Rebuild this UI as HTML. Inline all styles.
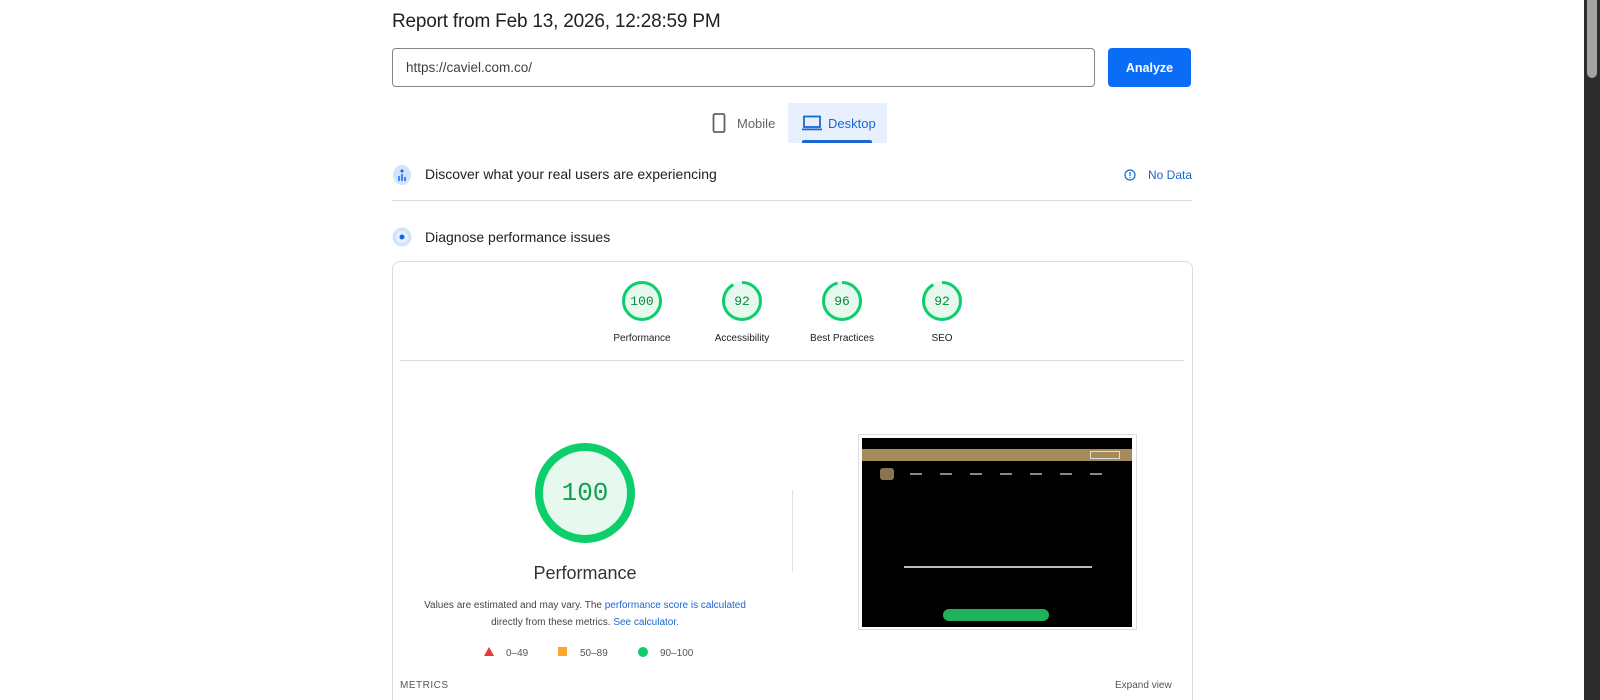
<!DOCTYPE html>
<html><head><meta charset="utf-8">
<style>
*{box-sizing:border-box;margin:0;padding:0}
html,body{width:1600px;height:700px;overflow:hidden}
body{background:#fff;font-family:"Liberation Sans",Arial,sans-serif;color:#202124;position:relative}
.a{position:absolute}
.sb{left:1584px;top:0;width:16px;height:700px;background:#2c2c2c}
.th{left:1587px;top:0;width:10px;height:78px;background:#a3a3a3;border-radius:0 0 5px 5px}
.title{left:392px;top:11px;font-size:19px;color:#202124;letter-spacing:-0.2px}
.inp{left:392px;top:48px;width:703px;height:39px;border:1px solid #80868b;border-radius:4px;font-size:13.5px;padding:11px 13px;color:#3c4043}
.btn{left:1108px;top:48px;width:83px;height:39px;border-radius:4px;color:#fff;font-size:12.5px;font-weight:bold;text-align:center;line-height:40px;background:#0b6cf5}
.tabd{left:788px;top:103px;width:99px;height:40px;background:#e8f0fe}
.ul{left:802px;top:140px;width:70px;height:3px;background:#1967d2;border-radius:2px 2px 0 0}
.t{font-size:13px}
.hr{height:1px;background:#dadce0}
.lbl{font-size:10px;color:#202124;text-align:center;width:100px}
.gt{font-family:"Liberation Mono",monospace;color:#0a8a3a;text-align:center}
</style></head><body>
<div class="a title">Report from Feb 13, 2026, 12:28:59 PM</div>
<div class="a inp">https://caviel.com.co/</div>
<div class="a btn">Analyze</div>
<svg class="a" style="left:712px;top:113px" width="14" height="20" viewBox="0 0 14 20"><rect x="1.5" y="1" width="11" height="18" rx="1.5" fill="none" stroke="#5f6368" stroke-width="1.8"/></svg>
<div class="a t" style="left:737px;top:116px;color:#5f6368">Mobile</div>
<div class="a tabd"></div>
<svg class="a" style="left:802px;top:115px" width="20" height="16" viewBox="0 0 20 16"><rect x="2" y="1.5" width="16" height="10.5" fill="none" stroke="#1967d2" stroke-width="1.8"/><rect x="0" y="13.5" width="20" height="1.8" fill="#1967d2"/></svg>
<div class="a t" style="left:828px;top:116px;color:#1967d2">Desktop</div>
<div class="a ul"></div>

<svg class="a" style="left:392px;top:164px" width="20" height="22"><ellipse cx="10" cy="11" rx="9" ry="10" fill="#d2e3fc"/><rect x="6" y="12" width="2" height="5" fill="#4285f4"/><rect x="9" y="10" width="2" height="7" fill="#4285f4"/><rect x="12" y="13" width="2" height="4" fill="#4285f4"/><circle cx="10" cy="7" r="1.5" fill="#1967d2"/></svg>
<div class="a" style="left:425px;top:166px;font-size:14px">Discover what your real users are experiencing</div>
<svg class="a" style="left:1124px;top:169px" width="12" height="12"><circle cx="6" cy="6" r="5" fill="none" stroke="#1967d2" stroke-width="1.2"/><rect x="5.4" y="3" width="1.2" height="4" fill="#1967d2"/><rect x="5.4" y="8" width="1.2" height="1.2" fill="#1967d2"/></svg>
<div class="a" style="left:1148px;top:168px;font-size:12px;color:#1967d2">No Data</div>
<div class="a hr" style="left:392px;top:200px;width:800px"></div>

<svg class="a" style="left:392px;top:227px" width="20" height="20"><circle cx="10" cy="10" r="9.5" fill="#d2e3fc"/><circle cx="10" cy="10" r="6" fill="#e8f0fe"/><circle cx="10" cy="10" r="2.5" fill="#1967d2"/></svg>
<div class="a" style="left:425px;top:229px;font-size:14px">Diagnose performance issues</div>

<div class="a" style="left:392px;top:261px;width:801px;height:439px;border:1px solid #dadce0;border-bottom:none;border-radius:8px 8px 0 0"></div>

<svg class="a" style="left:0;top:0" width="1600" height="700">
<g fill="#e7f8ee" stroke="#0cce6b" stroke-width="3">
<circle cx="642" cy="301" r="18.5"/>
<circle cx="742" cy="301" r="18.5" stroke="#e7f8ee"/>
<circle cx="842" cy="301" r="18.5" stroke="#e7f8ee"/>
<circle cx="942" cy="301" r="18.5" stroke="#e7f8ee"/>
</g>
<g fill="none" stroke="#0cce6b" stroke-width="3">
<circle cx="742" cy="301" r="18.5" stroke-dasharray="107 200" transform="rotate(-90 742 301)"/>
<circle cx="842" cy="301" r="18.5" stroke-dasharray="111.5 200" transform="rotate(-90 842 301)"/>
<circle cx="942" cy="301" r="18.5" stroke-dasharray="107 200" transform="rotate(-90 942 301)"/>
</g>
<circle cx="585" cy="493" r="46" fill="#e7f8ee" stroke="#0cce6b" stroke-width="8"/>
<polygon points="489,647 494,656 484,656" fill="#e53935"/>
<rect x="558" y="647" width="9" height="9" fill="#ffa726"/>
<circle cx="643" cy="652" r="5" fill="#0cce6b"/>
</svg>
<div class="a gt" style="left:622px;top:294px;width:40px;font-size:13px">100</div>
<div class="a gt" style="left:722px;top:294px;width:40px;font-size:13px">92</div>
<div class="a gt" style="left:822px;top:294px;width:40px;font-size:13px">96</div>
<div class="a gt" style="left:922px;top:294px;width:40px;font-size:13px">92</div>
<div class="a lbl" style="left:592px;top:333px">Performance</div>
<div class="a lbl" style="left:692px;top:333px">Accessibility</div>
<div class="a lbl" style="left:792px;top:333px">Best Practices</div>
<div class="a lbl" style="left:892px;top:333px">SEO</div>
<div class="a hr" style="left:400px;top:360px;width:784px"></div>

<div class="a gt" style="left:535px;top:478px;width:100px;font-size:26px;color:#10a050">100</div>
<div class="a" style="left:485px;top:563px;width:200px;text-align:center;font-size:18px;color:#333">Performance</div>
<div class="a" style="left:400px;top:597px;width:370px;text-align:center;font-size:10px;line-height:17px;color:#444">Values are estimated and may vary. The <span style="color:#1967d2">performance score is calculated</span><br>directly from these metrics. <span style="color:#1967d2">See calculator.</span></div>
<div class="a" style="left:506px;top:648px;font-size:10px;color:#555">0–49</div>
<div class="a" style="left:580px;top:648px;font-size:10px;color:#555">50–89</div>
<div class="a" style="left:660px;top:648px;font-size:10px;color:#555">90–100</div>
<div class="a" style="left:400px;top:680px;font-size:10px;color:#555;letter-spacing:.5px">METRICS</div>
<div class="a" style="left:1115px;top:680px;font-size:10px;color:#555">Expand view</div>

<div class="a" style="left:792px;top:490px;width:1px;height:82px;background:#e0e0e0"></div>
<div class="a" style="left:858px;top:434px;width:279px;height:196px;border:1px solid #ddd;background:#fff"></div>
<div class="a" style="left:862px;top:438px;width:270px;height:189px;background:#000"></div>
<div class="a" style="left:862px;top:449px;width:270px;height:12px;background:#a58a5a"></div>
<div class="a" style="left:1090px;top:451px;width:30px;height:8px;border:1px solid #ddd"></div>
<div class="a" style="left:880px;top:468px;width:14px;height:12px;background:#8a7350;border-radius:3px"></div>
<div class="a" style="left:910px;top:473px;width:200px;height:2px;background:repeating-linear-gradient(90deg,#888 0 12px,transparent 12px 30px)"></div>
<div class="a" style="left:904px;top:566px;width:188px;height:2px;background:#bbb"></div>
<div class="a" style="left:943px;top:609px;width:106px;height:12px;background:#20b25a;border-radius:6px"></div>
<div class="a sb"></div>
<div class="a th"></div>
</body></html>
